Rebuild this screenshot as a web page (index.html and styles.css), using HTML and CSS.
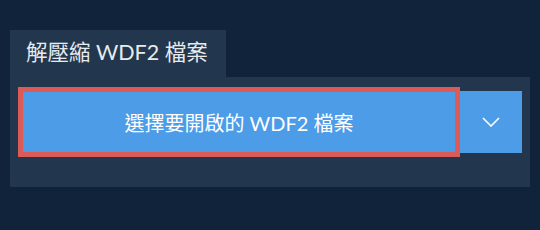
FILE: index.html
```html
<!DOCTYPE html>
<html lang="zh-Hant">
  <head>
    <meta charset="UTF-8" />
    <title>解壓縮 WDF2 檔案</title>
    <link rel="stylesheet" href="styles.css">
  </head>
  <body>
    <div class="wrap">
      <!-- tab -->
      <div class="tab">解壓縮 WDF2 檔案</div>
      <!-- panel -->
      <div class="panel">
        <div class="btn-row">
          <button class="btn-main">選擇要開啟的 WDF2 檔案</button>
          <button class="btn-drop">
            <svg width="18" height="10" viewBox="0 0 18 10">
              <path d="M1 1 L9 9 L17 1" fill="none" stroke="#fff" stroke-width="1.6" />
            </svg>
          </button>
        </div>
      </div>
    </div>
  </body>
</html>
```

FILE: styles.css
```css
body {
  margin: 0;
  background-color: #10233a;
  font-family: Lato, "Noto Sans CJK TC", sans-serif;
  color: #e6ebf0;
}
.wrap {
  padding: 30px 10px 0 10px;
}
.tab {
  display: inline-block;
  background-color: #22374e;
  height: 47px;
  line-height: 44px;
  padding: 0 18px 0 16px;
  font-size: 21.5px;
}
.panel {
  background-color: #22374e;
  height: 110px;
  padding: 10px 8px 0 8px;
  box-sizing: border-box;
}
.btn-row {
  display: flex;
  align-items: center;
}
.btn-main {
  width: 442px;
  height: 70px;
  border: 5px solid #db5b58;
  background-color: #4c9ce8;
  color: #fff;
  font-family: inherit;
  font-size: 20px;
  padding: 0;
}
.btn-drop {
  width: 62px;
  height: 62px;
  border: none;
  background-color: #4c9ce8;
  padding: 0;
  display: flex;
  justify-content: center;
  align-items: center;
}
```
